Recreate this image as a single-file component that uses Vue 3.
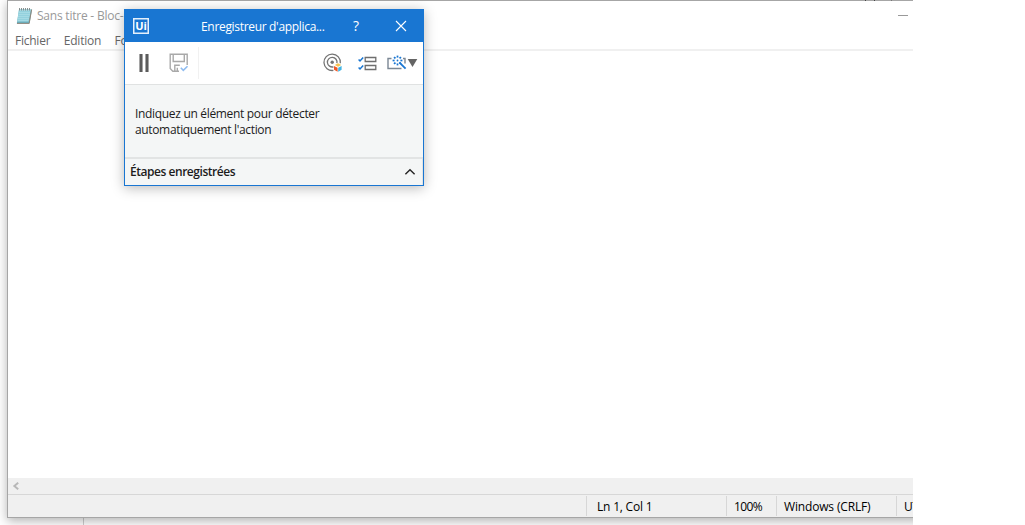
<script setup>
const menus = ['Fichier', 'Edition', 'Format']
const rays = [0, 45, 90, 135, 180, 225, 270, 315]
</script>

<template>
  <main class="desktop">
    <i class="desk-line"></i>
    <section class="notepad">
      <header class="np-title">
        <svg class="np-icon" width="17" height="18" viewBox="0 0 17 18">
          <path d="M3 2.5H16L13.5 16.5H.8Z" fill="#69afbe" />
          <path d="M3 2.5H15L12.5 14.5H1.2Z" fill="#a5dae4" />
          <path d="M3 4.5H14M2.6 6.5H13.8M2.3 8.5H13.4M2 10.5H13M1.6 12.5H12.6" stroke="#86cbd8" stroke-width=".6" />
          <path d="M15.6 2.5L13.2 16.4H1" fill="none" stroke="#91877b" />
          <path d="M3.5 1V3.5M5.5 1V3.5M7.5 1V3.5M9.5 1V3.5M11.5 1V3.5M13.5 1V3.5" stroke="#7c8583" stroke-width=".9" />
        </svg>
        <span class="np-name">Sans titre - Bloc-notes</span>
        <i class="minimize"></i>
      </header>
      <nav class="np-menu">
        <span v-for="m in menus" :key="m">{{ m }}</span>
      </nav>
      <div class="paper"></div>
      <div class="scroll">
        <svg width="8" height="8" viewBox="0 0 8 8"><path d="M6.2 .7L2.3 4L6.2 7.3" fill="none" stroke="#b8b8b8" stroke-width="1.9" /></svg>
      </div>
      <footer class="status">
        <span class="pos">Ln 1, Col 1</span>
        <span class="zoom">100%</span>
        <span class="eol">Windows (CRLF)</span>
        <span class="enc">UTF-8</span>
      </footer>
    </section>
    <i class="tick t1"></i><i class="tick t2"></i><i class="tick t3"></i>

    <section class="recorder">
      <header class="rec-title">
        <span class="logo">Ui</span>
        <span class="rec-name">Enregistreur d'applica...</span>
        <span class="help">?</span>
        <svg class="close" width="12" height="12" viewBox="0 0 12 12"><path d="M1 1L11 11M11 1L1 11" stroke="#fff" stroke-width="1.1" /></svg>
      </header>
      <div class="tools">
        <svg class="pause" width="10" height="18" viewBox="0 0 10 18"><path d="M0 0H4V18H0ZM6 0H10V18H6Z" fill="#a5a5a5" /><path d="M1 0H3V18H1ZM7 0H9V18H7Z" fill="#5b5b5b" /></svg>
        <svg class="save" width="20" height="20" viewBox="0 0 20 20" fill="none">
          <path d="M18.2 12V1.2H1.2V15.5L3.8 18.2H10M4.2 1.5V8.5H15.3V1.5M5.8 18V12.3H10.8M8.3 18V14.8" stroke="#a9a9a9" stroke-width="1.4" />
          <path d="M11.8 14.8L14.3 17.3L18.5 13.2" stroke="#8fbcf0" stroke-width="1.6" />
        </svg>
        <i class="sep"></i>
        <svg class="target" width="20" height="20" viewBox="0 0 20 20" fill="none">
          <g stroke="#747474" stroke-width="1.3">
            <path d="M10.4 17.4A8.2 8.2 0 1 1 17.3 10.2" />
            <path d="M10.5 13.8A4.8 4.8 0 1 1 13.9 10.2" />
          </g>
          <circle cx="9.2" cy="9.2" r="1.7" fill="#747474" />
          <path d="M15 10.2L18.2 12L15 13.8L11.8 12Z" fill="#f8c34f" />
          <path d="M11 13L14.6 14.8V18.8L11 16.8Z" fill="#f05a28" />
          <path d="M15.2 14.8L18.6 13V16.8L15.2 18.8Z" fill="#43b4e4" />
        </svg>
        <svg class="list" width="19" height="15" viewBox="0 0 19 15" fill="none">
          <path d="M7.2 1.5H17.8V5.5H7.2ZM7.2 9.5H17.8V13.5H7.2Z" stroke="#6e6e6e" stroke-width="1.3" />
          <path d="M.6 3.5L2 5L5.2 1.5M.6 11.5L2 13L5.2 9.5" stroke="#1976d2" stroke-width="1.5" />
        </svg>
        <svg class="wand" width="31" height="16" viewBox="0 0 31 16" fill="none">
          <path d="M4.5 3.5H1V13.5H14.5M16 3.5H18V8.5" stroke="#7b8794" stroke-width="1.4" />
          <g stroke="#1976d2" stroke-width="1.7">
            <path v-for="r in rays" :key="r" d="M10.5 2.6V.6" :transform="`rotate(${r} 10.5 5.5)`" />
            <path d="M12.3 7.3L18.6 13.6" stroke-width="1.8" />
          </g>
          <circle cx="10.5" cy="5.5" r=".9" fill="#1976d2" />
          <path d="M20.7 4H30.3L25.5 12Z" fill="#646464" />
        </svg>
      </div>
      <div class="message">
        <span class="m1">Indiquez un élément pour détecter</span><br>
        <span class="m2">automatiquement l'action</span>
      </div>
      <footer class="steps">
        <span class="steps-name">Étapes enregistrées</span>
        <svg width="12" height="8" viewBox="0 0 12 8"><path d="M1.4 6.3L6 1.7L10.6 6.3" fill="none" stroke="#252525" stroke-width="1.4" /></svg>
      </footer>
    </section>
  </main>
</template>

<style>
body { margin: 0; background: #fff; }
</style>

<style scoped>
* { box-sizing: border-box; }
.desktop {
  position: relative;
  width: 913px;
  height: 525px;
  overflow: hidden;
  background: #fff;
  font: 12px/16px "Open Sans", "Noto Sans", sans-serif;
  white-space: nowrap;
}
svg { display: block; flex: none; }
.desk-line { position: absolute; left: 83px; top: 518px; width: 1px; height: 7px; background: #cfcfcf; }
.notepad {
  position: absolute;
  left: 7px;
  top: 0;
  width: 930px;
  height: 518px;
  display: flex;
  flex-direction: column;
  border: 1px solid #a6a6a6;
  background: #fff;
  box-shadow: 0 3px 10px rgba(0, 0, 0, .3);
}
.np-title { display: flex; height: 30px; padding: 6px 0 0 8px; color: #999; }
.np-name { width: 200px; margin: 1px 0 0 4px; letter-spacing: -.22px; }
.minimize { width: 10px; height: 1px; margin: 8px 0 0 661px; background: #999; }
.np-menu {
  display: flex;
  gap: 13.5px;
  height: 20px;
  padding: 2px 0 0 7px;
  border-bottom: 2px solid #f0f0f0;
  color: #666;
  letter-spacing: -.24px;
}
.paper { flex: 1; }
.scroll { height: 16px; padding: 4px 0 0 4px; background: #f0f0f0; }
.status {
  display: flex;
  height: 23px;
  padding-top: 1px;
  border-top: 1px solid #d7d7d7;
  background: #f0f0f0;
  color: #000;
  line-height: 22px;
}
.status span { height: 20px; border-left: 1px solid #d7d7d7; padding-left: 7px; }
.status .pos { margin-left: 578px; width: 140px; padding-left: 10px; letter-spacing: -.2px; }
.zoom { width: 50px; letter-spacing: -.6px; }
.eol { width: 120px; letter-spacing: -.16px; }
.enc { letter-spacing: -.3px; }
.tick { position: absolute; top: 0; width: 1px; height: 1px; background: #444; }
.t1 { left: 865px; }
.t2 { left: 874px; }
.t3 { left: 891px; background: #777; }
.recorder {
  position: absolute;
  left: 124px;
  top: 9px;
  width: 300px;
  height: 177px;
  border: 1px solid #1976d2;
  background: #f4f6f6;
  box-shadow: 0 2px 12px rgba(0, 0, 0, .28);
  color: #1c1c1c;
}
.rec-title { display: flex; align-items: center; height: 32px; padding-left: 8px; background: #1976d2; color: #fff; }
.logo {
  width: 16px;
  height: 16px;
  border: 1px solid #e5f0fb;
  box-shadow: inset 0 0 0 .5px #e5f0fb;
  font: bold 11px/14px "Open Sans", sans-serif;
  text-align: center;
}
.rec-name { width: 124px; margin: 2px 0 0 52px; letter-spacing: -.32px; }
.help { width: 10px; margin: 0 0 0 26px; font-size: 14px; text-align: center; }
.close { margin-left: 34px; }
.tools { display: flex; align-items: center; height: 43px; background: #fff; border-bottom: 1px solid #e0e2e2; }
.pause { margin-left: 14px; }
.save { margin-left: 20px; }
.sep { width: 1px; height: 32px; margin-left: 9px; background: #f1f1f1; }
.target { margin: 0 0 0 123.5px; }
.list { margin-left: 15px; }
.wand { margin-left: 10px; }
.message { height: 74px; padding: 21px 0 0 10px; border-bottom: 2px solid #e2e4e4; }
.m1 { letter-spacing: -.32px; }
.m2 { letter-spacing: -.35px; }
.steps { display: flex; align-items: center; justify-content: space-between; height: 26px; padding: 0 6px 0 5px; border-right: 1px solid #e2e4e4; }
.steps-name { font-weight: 600; letter-spacing: -.46px; }
</style>
